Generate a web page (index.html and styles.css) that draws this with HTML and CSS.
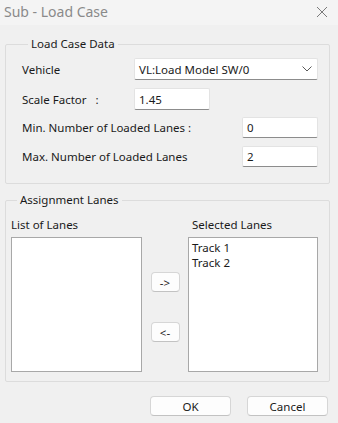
FILE: index.html
```html
<!DOCTYPE html>
<html lang="en">
<head>
    <meta charset="UTF-8">
    <meta name="viewport" content="width=device-width, initial-scale=1.0">
    <title>Sub - Load Case</title>
    <link rel="stylesheet" href="styles.css">
</head>
<body>
    <div class="titlebar">
        <span class="title">Sub - Load Case</span>
        <svg class="close" width="12" height="12" viewBox="0 0 12 12">
            <path d="M1 1 L11 11 M11 1 L1 11" stroke="#7a7a7a" stroke-width="1" fill="none"/>
        </svg>
    </div>
    <div class="content">
        <!-- Dados do caso de carga -->
        <fieldset class="group data-group">
            <legend>Load Case Data</legend>
            <div class="row tall">
                <span class="label">Vehicle</span>
                <div class="combo">
                    <span>VL:Load Model SW/0</span>
                    <svg width="10" height="6" viewBox="0 0 10 6">
                        <path d="M0.5 0.5 L5 5 L9.5 0.5" stroke="#5a5a5a" stroke-width="1" fill="none"/>
                    </svg>
                </div>
            </div>
            <div class="row tall">
                <span class="label">Scale Factor&nbsp;&nbsp;&nbsp;:</span>
                <div class="field">1.45</div>
            </div>
            <div class="row spread">
                <span class="label">Min. Number of Loaded Lanes :</span>
                <div class="field">0</div>
            </div>
            <div class="row spread">
                <span class="label">Max. Number of Loaded Lanes</span>
                <div class="field">2</div>
            </div>
        </fieldset>

        <!-- Faixas -->
        <fieldset class="group lanes-group">
            <legend>Assignment Lanes</legend>
            <div class="lanes">
                <div class="lane-col">
                    <span class="lane-title">List of Lanes</span>
                    <div class="listbox"></div>
                </div>
                <div class="arrows">
                    <button type="button" class="small-btn add">-&gt;</button>
                    <button type="button" class="small-btn remove">&lt;-</button>
                </div>
                <div class="lane-col right">
                    <span class="lane-title">Selected Lanes</span>
                    <div class="listbox">
                        <div class="item">Track 1</div>
                        <div class="item">Track 2</div>
                    </div>
                </div>
            </div>
        </fieldset>

        <div class="footer">
            <button type="button" class="btn">OK</button>
            <button type="button" class="btn">Cancel</button>
        </div>
    </div>
</body>
</html>
```

FILE: styles.css
```css
body {
    margin: 0;
    background-color: #f0f0f0;
    font-family: "Noto Sans", "Open Sans", sans-serif;
    font-size: 11.5px;
    color: #1a1a1a;
}
.titlebar {
    height: 25px;
    background-color: #f4f4f4;
    display: flex;
    align-items: center;
    justify-content: space-between;
    padding: 0 10px 2px 4px;
    box-sizing: border-box;
}
.title {
    font-size: 14px;
    color: #8a8a8a;
}
.content {
    padding: 0 8px 0 5px;
}
.group {
    margin: 0;
    border: 1px solid #dcdcdc;
    border-radius: 2px;
}
.group legend {
    padding: 0 3px;
    margin-left: 6px;
    line-height: 16px;
    color: #1a1a1a;
}
.data-group {
    margin-top: 11px;
    padding: 6px 11px 16px 16px;
    display: flex;
    flex-direction: column;
    gap: 8px;
}
.row {
    display: flex;
    align-items: center;
    height: 21px;
}
.row.tall {
    height: 22px;
}
.row.tall + .row.spread {
    margin-top: -1px;
}
.row .label {
    width: 112px;
}
.row.spread {
    justify-content: space-between;
}
.row.spread .label {
    width: auto;
}
.combo,
.field {
    height: 100%;
    box-sizing: border-box;
    background-color: #fff;
    border: 1px solid #e3e3e3;
    border-bottom-color: #8c8c8c;
    border-radius: 2px;
    display: flex;
    align-items: center;
    padding: 0 4px;
}
.combo {
    flex: 1;
    justify-content: space-between;
    padding-right: 5px;
}
.field {
    width: 76px;
}
.lanes-group {
    margin-top: 8px;
    padding: 9px 11px 9px 5px;
}
.lanes {
    display: flex;
    justify-content: space-between;
}
.lane-col {
    display: flex;
    flex-direction: column;
    gap: 4px;
    width: 131px;
}
.lane-col.right {
    width: 130px;
}
.lane-col.right .lane-title {
    padding-left: 4px;
}
.lane-title {
    line-height: 16px;
}
.listbox {
    height: 135px;
    box-sizing: border-box;
    background-color: #fff;
    border: 1px solid #a8a8a8;
    padding: 2px 3px;
}
.item {
    line-height: 15px;
}
.arrows {
    display: flex;
    flex-direction: column;
    padding-top: 55px;
    gap: 30px;
}
.small-btn,
.btn {
    font-family: inherit;
    font-size: 11.5px;
    color: #1a1a1a;
    background-color: #fdfdfd;
    border: 1px solid #d6d6d6;
    border-bottom-color: #c2c2c2;
    border-radius: 4px;
    padding: 0;
    height: 20px;
}
.small-btn {
    width: 29px;
}
.footer {
    display: flex;
    justify-content: flex-end;
    gap: 16px;
    margin-top: 14px;
    padding-right: 2px;
}
.btn {
    width: 81px;
}
```
